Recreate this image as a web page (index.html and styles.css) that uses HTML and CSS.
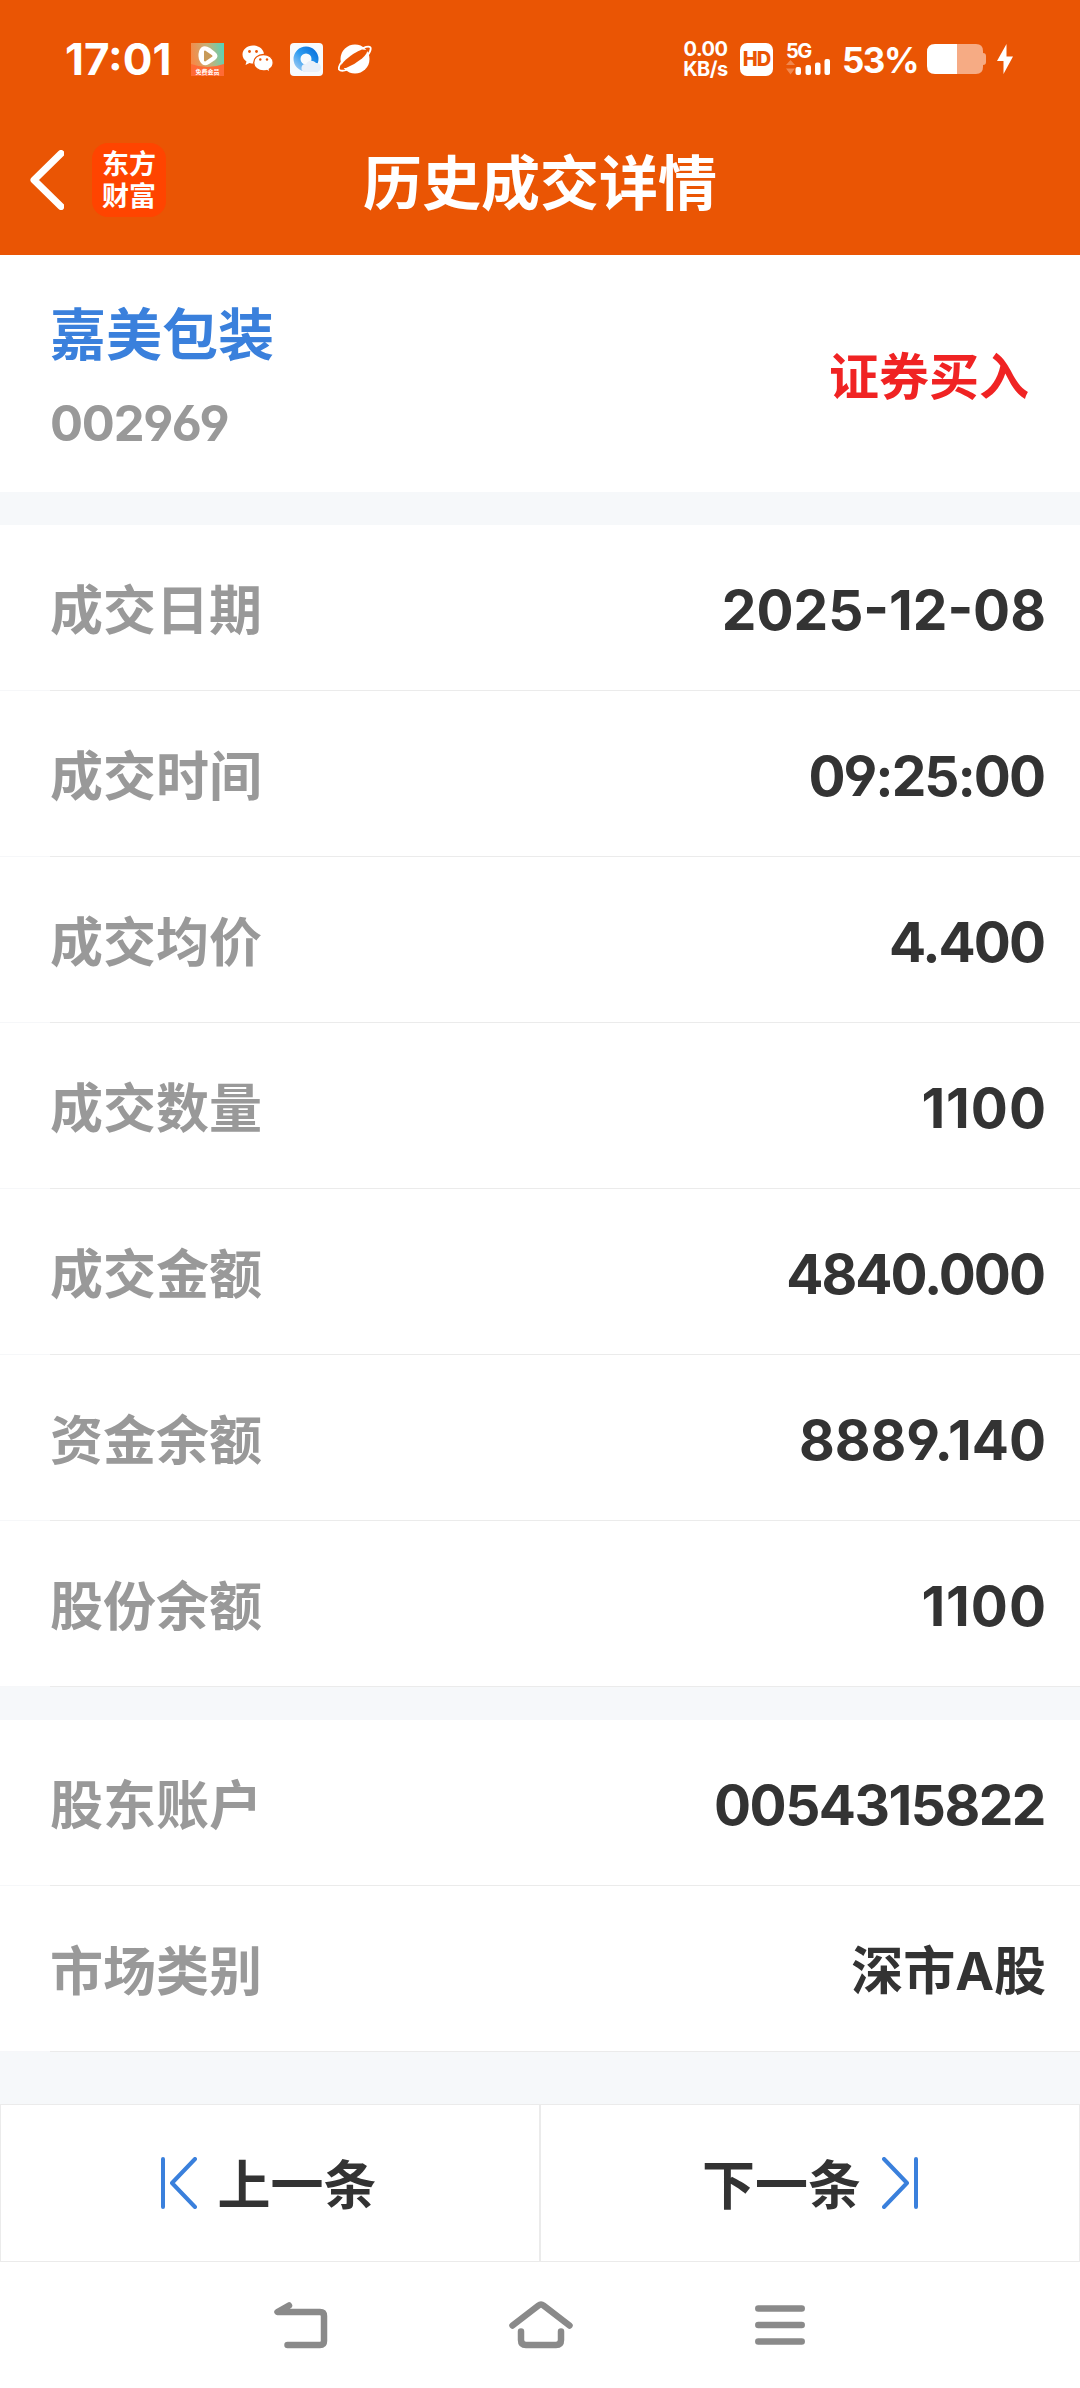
FILE: index.html
```html
<!DOCTYPE html>
<html lang="zh-CN">
<head>
    <meta charset="UTF-8">
    <meta name="viewport" content="width=device-width, initial-scale=1.0">
    <title>历史成交详情</title>
    <link rel="stylesheet" href="styles.css">
</head>
<body>

    <div class="top">
        <!-- 状态栏 -->
        <div class="status-bar">
            <span class="time">17:01</span>
            <svg class="icon-video" width="33" height="33" viewBox="0 0 33 33">
                <defs>
                    <linearGradient id="video" x1="0" y1="0.2" x2="1" y2="0">
                        <stop offset="0" stop-color="#f58a48"/>
                        <stop offset="0.5" stop-color="#c3b27a"/>
                        <stop offset="1" stop-color="#4fd6bd"/>
                    </linearGradient>
                </defs>
                <rect width="33" height="33" fill="url(#video)"/>
                <path d="M0 21q16 6 33 0v12H0z" fill="#ff6a35"/>
                <path d="M12 3.5q3-1 7 1.5l5 4q5 4 0 8l-6 4q-5 3-8-1-3-4-2.500-9 .5-6 4.500-7.500z" fill="#fff"/>
                <path d="M14 8.500l6.500 4.500-6.500 4.500z" fill="#c79a58" stroke="#c79a58" stroke-width="2" stroke-linejoin="round"/>
                <text class="video-text" x="16.500" y="31" text-anchor="middle">免费会员</text>
            </svg>
            <svg class="icon-wechat" width="32" height="28" viewBox="0 0 32 28">
                <path d="M11 .5C5 .5.500 4.500.500 9.500c0 3 1.500 5.300 4 7l-1 3.500 4-2c1.200.4 2.500.5 3.800.5C17 18.500 22 14.500 22 9.500S17 .5 11 .5z" fill="#fff"/>
                <path d="M21.500 9.500c-5.500 0-9.800 3.600-9.800 8.200s4.300 8.300 9.800 8.300c1.200 0 2.300-.2 3.300-.5l3.400 1.800-.9-3c2.500-1.600 3.900-4 3.900-6.600 0-4.600-4.200-8.200-9.700-8.200z" fill="#fff" stroke="#ea5504" stroke-width="1.300"/>
                <circle cx="7.500" cy="6.500" r="1.400" fill="#ea5504"/>
                <circle cx="14.500" cy="6.500" r="1.400" fill="#ea5504"/>
                <circle cx="18.300" cy="14.500" r="1.200" fill="#ea5504"/>
                <circle cx="25" cy="14.500" r="1.200" fill="#ea5504"/>
            </svg>
            <svg class="icon-browser" width="33" height="33" viewBox="0 0 33 33">
                <defs>
                    <linearGradient id="ring" x1="1" y1="0" x2="0" y2="1">
                        <stop offset="0" stop-color="#0d74dd"/>
                        <stop offset="0.5" stop-color="#2a9af0"/>
                        <stop offset="1" stop-color="#8fc4f2"/>
                    </linearGradient>
                </defs>
                <rect width="33" height="33" rx="4" fill="#f7fafd"/>
                <circle cx="16" cy="16" r="9" fill="none" stroke="url(#ring)" stroke-width="7"/>
                <path d="M15 29a4 4 0 0 1 1-8 6 6 0 0 1 10-1 4.500 4.500 0 0 1 1 9z" fill="#e9f0f9"/>
            </svg>
            <!-- 星球：白色圆球，中间一条斜缝，外圈光环 -->
            <svg class="icon-planet" width="34" height="30" viewBox="0 0 34 30">
                <circle cx="17" cy="15" r="14.500" fill="#fff"/>
                <path d="M3 24Q2 21 8 15.500 16 8.500 24 5.500l5 .5q1 3-5 8.500Q16 21 8 24z" fill="#ea5504"/>
                <path d="M4.500 17Q0 22 1 25.500 3 28 10 25.500M25 4q6-2.500 7.500-.5 1 3-3 8" fill="none" stroke="#fff" stroke-width="1.800"/>
            </svg>

            <span class="speed">0.00<br>KB/s</span>
            <span class="hd">HD</span>
            <span class="signal">
                <span class="signal-type">5G</span>
                <svg width="44" height="16" viewBox="0 0 44 16">
                    <path d="M0 6l4.500-5L9 6zM0 9.500h9l-4.500 6z" fill="#fff" opacity="0.3"/>
                    <rect x="9.500" y="8" width="5.500" height="8" rx="2" fill="#fff"/>
                    <rect x="19.500" y="6" width="5.500" height="10" rx="2" fill="#fff"/>
                    <rect x="29" y="3.500" width="5.500" height="12.500" rx="2" fill="#fff"/>
                    <rect x="38.500" y="0" width="5.500" height="16" rx="2" fill="#fff"/>
                </svg>
            </span>
            <span class="percent">53%</span>
            <svg class="icon-battery" width="59" height="30" viewBox="0 0 59 30">
                <path d="M30 0h19q7 0 7 7v2q3 0 3 3v6q0 3-3 3v2q0 7-7 7H30z" fill="#f6ab84"/>
                <path d="M30 0H8Q0 0 0 8v14q0 8 8 8h22z" fill="#fff"/>
            </svg>
            <svg class="icon-bolt" width="16" height="30" viewBox="0 0 16 30">
                <path d="M9.500 0L0 17h6.500v13L16 12.500H9.500z" fill="#fff"/>
            </svg>
        </div>

        <!-- 标题栏 -->
        <div class="header">
            <div class="header-left">
                <svg width="36" height="60" viewBox="0 0 36 60">
                    <path d="M33 3.500L6 30l27 26.500" fill="none" stroke="#fff" stroke-width="7" stroke-linecap="round" stroke-linejoin="round"/>
                </svg>
                <div class="logo">东方<br>财富</div>
            </div>
            <h1>历史成交详情</h1>
        </div>
    </div>

    <div class="stock">
        <div>
            <div class="stock-name">嘉美包装</div>
            <div class="stock-code">002969</div>
        </div>
        <div class="trade-type">证券买入</div>
    </div>

    <!-- 成交信息 -->
    <div class="list">
        <div class="row"><span class="label">成交日期</span><span class="value">2025-12-08</span></div>
        <div class="row"><span class="label">成交时间</span><span class="value tight">09:25:00</span></div>
        <div class="row"><span class="label">成交均价</span><span class="value tight">4.400</span></div>
        <div class="row"><span class="label">成交数量</span><span class="value wide">1100</span></div>
        <div class="row"><span class="label">成交金额</span><span class="value tight">4840.000</span></div>
        <div class="row"><span class="label">资金余额</span><span class="value">8889.140</span></div>
        <div class="row"><span class="label">股份余额</span><span class="value wide">1100</span></div>
    </div>

    <!-- 账户信息 -->
    <div class="list">
        <div class="row"><span class="label">股东账户</span><span class="value account">0054315822</span></div>
        <div class="row"><span class="label">市场类别</span><span class="value market">深市A股</span></div>
    </div>

    <!-- 翻页按钮 -->
    <div class="pager">
        <button class="prev">
            <svg width="36" height="52" viewBox="0 0 36 52">
                <path d="M2 2v48M34 2L11 26l23 24" fill="none" stroke="#3a80dc" stroke-width="4" stroke-linecap="round" stroke-linejoin="round"/>
            </svg>
            <span>上一条</span>
        </button>
        <button class="next">
            <span>下一条</span>
            <svg width="36" height="52" viewBox="0 0 36 52">
                <path d="M34 2v48M2 2l23 24L2 50" fill="none" stroke="#3a80dc" stroke-width="4" stroke-linecap="round" stroke-linejoin="round"/>
            </svg>
        </button>
    </div>

    <!-- 系统导航键 -->
    <div class="nav">
        <svg width="54" height="48" viewBox="0 0 54 48">
            <path d="M15 4.500L3.500 11H46q4 0 4 4v25q0 4-4 4H13.500" fill="none" stroke="#8a8a8a" stroke-width="6.500" stroke-linecap="round" stroke-linejoin="round"/>
        </svg>
        <svg width="64" height="48" viewBox="0 0 64 48">
            <path d="M3.500 24.500L29.500 4.500q2.500-2 5 0l26 20M12 30.500V39q0 5 5 5h30q5 0 5-5v-8.500" fill="none" stroke="#8a8a8a" stroke-width="6.500" stroke-linecap="round"/>
        </svg>
        <svg width="50" height="40" viewBox="0 0 50 40">
            <path d="M3.300 3.500h43.400M3.300 20h43.400M3.300 36.500h43.400" stroke="#8a8a8a" stroke-width="6.500" stroke-linecap="round"/>
        </svg>
    </div>

</body>
</html>
```

FILE: styles.css
```css
* {
    box-sizing: border-box;
}

body {
    margin: 0;
    background-color: #f6f8fa;
    color: #333;
    font-family: Inter, "Noto Sans CJK SC", sans-serif;
}

svg {
    display: block;
    flex: none;
}

.top {
    height: 255px;
    background-color: #ea5504;
    color: #fff;
}

/* 状态栏 */
.status-bar {
    display: flex;
    align-items: center;
    height: 118px;
    padding: 0 67px 0 65px;
}

.time {
    width: 126px;
    font-size: 44px;
    font-weight: 700;
    white-space: nowrap;
}

.video-text {
    font-size: 6px;
    font-weight: 700;
    fill: #fff;
}

.icon-wechat {
    margin-left: 18px;
}

.icon-browser {
    margin-left: 16px;
}

.icon-planet {
    margin-left: 15px;
}

.speed {
    width: 45px;
    margin-left: auto;
    margin-right: 12px;
    font-size: 20px;
    font-weight: 700;
    line-height: 20px;
    letter-spacing: -0.5px;
    text-align: center;
    white-space: nowrap;
}

.hd {
    width: 33px;
    height: 33px;
    margin-right: 13px;
    border-radius: 7px;
    background-color: #fff;
    color: #ea5504;
    font-size: 20px;
    font-weight: 800;
    line-height: 33px;
    text-align: center;
    letter-spacing: -1px;
}

.signal {
    width: 44px;
    margin-right: 12px;
}

.signal-type {
    display: block;
    height: 15px;
    font-size: 20px;
    font-weight: 700;
    line-height: 14px;
    letter-spacing: -1.5px;
}

.percent {
    width: 85px;
    padding-top: 2px;
    font-size: 35px;
    font-weight: 650;
    letter-spacing: -1.5px;
    white-space: nowrap;
}

.icon-bolt {
    margin-left: 11px;
}

/* 标题栏 */
.header {
    display: grid;
    grid-template-columns: 1fr auto 1fr;
    align-items: center;
    height: 124px;
}

.header-left {
    display: flex;
    align-items: center;
    gap: 28px;
    padding-left: 28px;
}

.logo {
    width: 74px;
    height: 74px;
    padding-top: 4px;
    border-radius: 16px;
    background-color: #ff4400;
    font-family: "Noto Sans CJK SC", sans-serif;
    font-size: 27px;
    font-weight: 700;
    line-height: 32px;
    text-align: center;
}

.header h1 {
    margin: 0;
    padding-top: 8px;
    font-size: 59px;
    font-weight: 700;
    line-height: 80px;
}

/* 股票信息 */
.stock {
    display: flex;
    justify-content: space-between;
    align-items: center;
    height: 237px;
    padding: 0 51px 0 50px;
    background-color: #fff;
}

.stock-name {
    padding-top: 11px;
    color: #3a80dc;
    font-size: 56px;
    font-weight: 700;
    line-height: 88px;
}

.stock-code {
    padding-top: 1px;
    color: #999;
    font-size: 49px;
    font-weight: 650;
    line-height: 88px;
    letter-spacing: -1.2px;
    font-feature-settings: "cv03", "cv04";
}

.trade-type {
    padding-bottom: 2px;
    color: #f02323;
    font-size: 50px;
    font-weight: 700;
}

/* 明细列表 */
.list {
    margin-top: 33px;
    background-color: #fff;
}

.row {
    display: flex;
    justify-content: space-between;
    align-items: center;
    height: 166px;
    padding: 3px 34px 0 50px;
    background-image: linear-gradient(to right, #f6f7f9 50px, #ebebeb 50px);
    background-position: bottom;
    background-repeat: no-repeat;
    background-size: 100% 1px;
}

.label {
    margin-bottom: 6px;
    color: #999;
    font-size: 53px;
    font-weight: 700;
}

.value {
    font-size: 55px;
    font-weight: 650;
    font-feature-settings: "cv03", "cv04";
}

.tight {
    margin-right: 2px;
    letter-spacing: -2px;
}

.wide {
    margin-right: -1px;
    letter-spacing: 1px;
}

.account {
    margin-right: 1px;
    letter-spacing: -1.5px;
}

.market {
    margin-bottom: 6px;
    font-size: 52px;
    font-weight: 700;
}

/* 翻页按钮 */
.pager {
    display: flex;
    margin-top: 52px;
}

.pager button {
    display: flex;
    justify-content: center;
    align-items: center;
    gap: 21px;
    width: 50%;
    height: 158px;
    padding: 0;
    border: 1px solid #ebebeb;
    background-color: #fff;
    color: #333;
    font-family: inherit;
    font-size: 53px;
    font-weight: 700;
}

.pager span {
    margin-bottom: 2px;
}

.pager .prev {
    padding-right: 3px;
}

/* 系统导航键 */
.nav {
    display: flex;
    align-items: center;
    height: 126px;
    padding-left: 274px;
    background-color: #fff;
}

.nav svg + svg {
    margin-left: 181px;
}

.nav svg:last-child {
    margin-left: 182px;
}
```
